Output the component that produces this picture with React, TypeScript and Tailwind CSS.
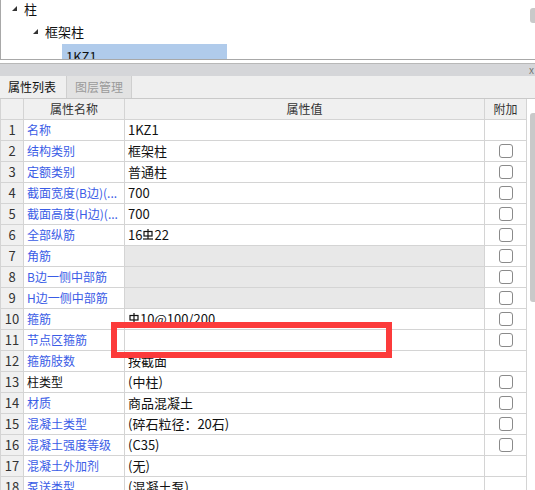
import React from 'react';

type Row = {
  no: number;
  name: string;
  value: React.ReactNode;
  check: boolean;
  black?: boolean;
  locked?: boolean;
};

const Rebar: React.FC = () => (
  <svg width="10" height="12" viewBox="0 0 10 12" className="inline-block align-[-1px] mx-[1px]" fill="none" stroke="#111" strokeWidth="1.2">
    <rect x="1" y="2.5" width="8" height="4.5" />
    <line x1="5" y1="0" x2="5" y2="10" />
    <line x1="0" y1="10" x2="10" y2="10" />
  </svg>
);

const rows: Row[] = [
  { no: 1, name: '名称', value: '1KZ1', check: false },
  { no: 2, name: '结构类别', value: '框架柱', check: true },
  { no: 3, name: '定额类别', value: '普通柱', check: true },
  { no: 4, name: '截面宽度(B边)(...', value: '700', check: true },
  { no: 5, name: '截面高度(H边)(...', value: '700', check: true },
  { no: 6, name: '全部纵筋', value: <>16<Rebar />22</>, check: true },
  { no: 7, name: '角筋', value: '', check: true, locked: true },
  { no: 8, name: 'B边一侧中部筋', value: '', check: true, locked: true },
  { no: 9, name: 'H边一侧中部筋', value: '', check: true, locked: true },
  { no: 10, name: '箍筋', value: <><Rebar />10@100/200</>, check: true },
  { no: 11, name: '节点区箍筋', value: '', check: true },
  { no: 12, name: '箍筋肢数', value: '按截面', check: false },
  { no: 13, name: '柱类型', value: '(中柱)', check: true, black: true },
  { no: 14, name: '材质', value: '商品混凝土', check: true },
  { no: 15, name: '混凝土类型', value: '(碎石粒径：20石)', check: true },
  { no: 16, name: '混凝土强度等级', value: '(C35)', check: true },
  { no: 17, name: '混凝土外加剂', value: '(无)', check: false },
  { no: 18, name: '泵送类型', value: '(混凝土泵)', check: false },
];

const Arrow: React.FC = () => (
  <svg width="5" height="5" viewBox="0 0 5 5" className="mr-[7px]">
    <polygon points="5,0 5,5 0,5" fill="#333" />
  </svg>
);

const App: React.FC = () => {
  return (
    <div
      className="relative w-[535px] h-[490px] overflow-hidden bg-white text-[12px] text-[#111]"
      style={{ fontFamily: '"Noto Sans CJK SC", "Noto Sans", sans-serif' }}
    >
      {/* tree */}
      <div className="h-[60px] border-l border-b border-[#a8a8a8] overflow-hidden">
        <div className="-mt-[3px]">
          <div className="h-[23px] flex items-center pl-[11px]">
            <Arrow />
            <span className="text-[13px] leading-[16px]">柱</span>
          </div>
          <div className="h-[23px] flex items-center pl-[32px]">
            <Arrow />
            <span className="text-[13px] leading-[16px]">框架柱</span>
          </div>
          <div className="h-[23px] pt-[1px] pl-[61px]">
            <div className="w-[165px] h-[21px] bg-[#b0cbeb] pl-[4px] pt-[5px] text-[13px] leading-[16px]">1KZ1</div>
          </div>
        </div>
      </div>
      <div className="h-[3px]" />

      {/* panel title bar */}
      <div className="h-[13px] border-t border-[#b8b8b8] bg-[#d5d6d9] flex justify-end items-center">
        <span className="text-[10px] leading-none text-[#777] pr-[1px]">x</span>
      </div>

      {/* tabs */}
      <div className="h-[23px] bg-[#efefef] border-b border-[#c9c9c9] flex">
        <div className="w-[66px] flex items-center pl-[8px] text-[12px] leading-[16px] text-[#111]">属性列表</div>
        <div className="w-[66px] flex items-center justify-center bg-[#e2e2e2] border-l border-r border-[#cfcfcf] text-[12px] leading-[16px] text-[#9a9a9a]">
          图层管理
        </div>
      </div>

      {/* table */}
      <div className="w-[527px] border-l border-[#d4d4d4] leading-[16px]">
        <div className="flex h-[21px] border-b border-[#d4d4d4] bg-[#f0f0f0] text-[#333]">
          <div className="w-[23px] border-r border-[#d4d4d4]" />
          <div className="w-[101px] border-r border-[#d4d4d4] flex items-center justify-center">属性名称</div>
          <div className="w-[360px] border-r border-[#d4d4d4] flex items-center justify-center">属性值</div>
          <div className="w-[42px] border-r border-[#d4d4d4] flex items-center justify-center">附加</div>
        </div>
        {rows.map((r) => (
          <div key={r.no} className="flex h-[21px] border-b border-[#d4d4d4]">
            <div className="w-[23px] border-r border-[#d4d4d4] bg-[#f0f0f0] flex items-center justify-center text-[13px] text-[#333]">
              {r.no}
            </div>
            <div
              className={`w-[101px] border-r border-[#d4d4d4] pl-[3px] flex items-center overflow-hidden whitespace-nowrap ${
                r.black ? 'text-[#111]' : 'text-[#3a5ce6]'
              }`}
            >
              {r.name}
            </div>
            <div
              className={`w-[360px] border-r border-[#d4d4d4] pl-[3px] flex items-center text-[13px] text-[#111] ${
                r.locked ? 'bg-[#e8e8e8]' : 'bg-white'
              }`}
            >
              {r.value}
            </div>
            <div className="w-[42px] border-r border-[#d4d4d4] flex items-center justify-center">
              {r.check && <div className="w-[14px] h-[14px] border border-[#8a8a8a] rounded-[3px] bg-white" />}
            </div>
          </div>
        ))}
      </div>

      {/* scrollbars */}
      <div className="absolute right-0 top-[8px] w-[5px] h-[15px] bg-[#c9c9c9] rounded-l-[3px]" />
      <div className="absolute right-0 top-[113px] w-[5px] h-[189px] bg-[#c9c9c9] rounded-l-[3px]" />

      {/* annotation */}
      <div className="absolute left-[111px] top-[322px] w-[281px] h-[36px] border-[6px] border-[#fc3b3b]" />
    </div>
  );
};

export default App;
